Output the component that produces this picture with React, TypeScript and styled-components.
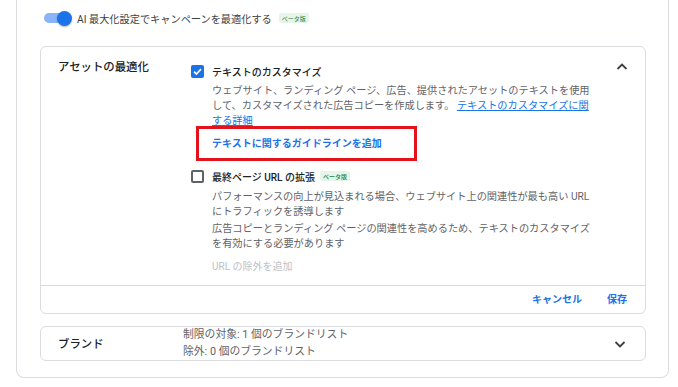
import styled, { createGlobalStyle } from 'styled-components';

const GlobalStyle = createGlobalStyle`
  body {
    margin: 0;
    background: #ffffff;
    font-family: Roboto, 'Noto Sans CJK JP', sans-serif;
    color: #3c4043;
  }
  * {
    box-sizing: border-box;
  }
`;

const Card = styled.div`
  margin-left: 16px;
  width: 653px;
  border: 1px solid #dadce0;
  border-top: 0;
  border-radius: 0 0 8px 8px;
  padding: 8px 22px 16px 23px;
`;

const ToggleRow = styled.div`
  display: flex;
  align-items: center;
  height: 20px;
  padding-left: 4px;
  font-size: 10.2px;
`;

const Toggle = styled.span`
  position: relative;
  display: inline-block;
  width: 28px;
  height: 15px;
  margin-right: 5px;
  &::before {
    content: '';
    position: absolute;
    left: 0;
    top: 2.5px;
    width: 27px;
    height: 10px;
    border-radius: 5px;
    background: #8ab4f8;
  }
  &::after {
    content: '';
    position: absolute;
    right: 0;
    top: 0;
    width: 15px;
    height: 15px;
    border-radius: 50%;
    background: #1a73e8;
    box-shadow: 0 1px 2px rgba(0, 0, 0, 0.3);
  }
`;

const Beta = styled.span<{ $gap: number }>`
  display: inline-flex;
  align-items: center;
  height: 10px;
  padding: 0 3px;
  margin-left: ${(p) => p.$gap}px;
  background: #e6f4ea;
  color: #188038;
  font-size: 6px;
  border-radius: 2px;
`;

const Panel = styled.div<{ $top: number }>`
  margin-top: ${(p) => p.$top}px;
  border: 1px solid #dadce0;
  border-radius: 6px;
`;

const PanelBody = styled.div<{ $cols: string; $align: string }>`
  display: grid;
  grid-template-columns: ${(p) => p.$cols};
  align-items: ${(p) => p.$align};
  padding-left: 17px;
`;

const Title = styled.div<{ $top?: number }>`
  margin-top: ${(p) => p.$top ?? 0}px;
  font-size: 11.4px;
  font-weight: 500;
  line-height: 16px;
  color: #202124;
`;

const Content = styled.div`
  display: flex;
  flex-direction: column;
  align-items: flex-start;
  padding-top: 12px;
`;

const CheckRow = styled.div<{ $top: number }>`
  display: flex;
  align-items: center;
  height: 16px;
  margin-top: ${(p) => p.$top}px;
  font-size: 10px;
  font-weight: 500;
  color: #202124;
`;

const Box = styled.span<{ $checked?: boolean }>`
  display: inline-flex;
  align-items: center;
  justify-content: center;
  width: 13px;
  height: 13px;
  margin-right: 8px;
  border-radius: 2px;
  background: ${(p) => (p.$checked ? '#1a73e8' : '#ffffff')};
  border: ${(p) => (p.$checked ? '0' : '2px solid #5f6368')};
`;

const Desc = styled.p<{ $top: number }>`
  margin: ${(p) => p.$top}px 0 0 21px;
  width: 385px;
  font-size: 10.2px;
  line-height: 15px;
  color: #5f6368;
`;

const InlineLink = styled.a`
  color: #1a73e8;
  text-decoration: underline;
`;

const Highlight = styled.div`
  margin: -2px 0 0 5px;
  width: 221px;
  height: 35px;
  border: 3px solid #e3131b;
  display: flex;
  align-items: center;
  padding-left: 13px;
`;

const Action = styled.span<{ $muted?: boolean }>`
  font-size: 10px;
  font-weight: ${(p) => (p.$muted ? 400 : 600)};
  color: ${(p) => (p.$muted ? '#bdc1c6' : '#1a73e8')};
  line-height: 15px;
`;

const Muted = styled.div`
  margin: 4px 0 11px 21px;
`;

const ChevronCell = styled.div<{ $top: number; $align: string }>`
  display: flex;
  justify-content: center;
  align-self: stretch;
  align-items: ${(p) => p.$align};
  padding-top: ${(p) => p.$top}px;
`;

const Footer = styled.div`
  display: flex;
  justify-content: flex-end;
  align-items: center;
  gap: 25px;
  height: 28px;
  padding-right: 18px;
  border-top: 1px solid #dadce0;
`;

const BrandLines = styled.div`
  font-size: 10.8px;
  line-height: 16.5px;
  color: #5f6368;
`;

function Chevron({ up }: { up?: boolean }) {
  return (
    <svg width="14" height="14" viewBox="0 0 14 14">
      <polyline
        points={up ? '2.5,9 7,4.5 11.5,9' : '2.5,5 7,9.5 11.5,5'}
        fill="none"
        stroke="#3c4043"
        strokeWidth="1.8"
      />
    </svg>
  );
}

function Check() {
  return (
    <svg width="11" height="11" viewBox="0 0 11 11">
      <polyline points="2,5.7 4.4,8 9,3.2" fill="none" stroke="#fff" strokeWidth="1.7" />
    </svg>
  );
}

export default function App() {
  return (
    <>
      <GlobalStyle />
      <Card>
        <ToggleRow>
          <Toggle />
          AI 最大化設定でキャンペーンを最適化する
          <Beta $gap={7}>ベータ版</Beta>
        </ToggleRow>

        <Panel $top={18}>
          <PanelBody $cols="133px 1fr 50px" $align="start">
            <Title $top={12}>アセットの最適化</Title>
            <Content>
              <CheckRow $top={4}>
                <Box $checked>
                  <Check />
                </Box>
                テキストのカスタマイズ
              </CheckRow>
              <Desc $top={4}>
                ウェブサイト、ランディング ページ、広告、提供されたアセットのテキストを使用して、カスタマイズされた広告コピーを作成します。{' '}
                <InlineLink>テキストのカスタマイズに関する詳細</InlineLink>
              </Desc>
              <Highlight>
                <Action>テキストに関するガイドラインを追加</Action>
              </Highlight>
              <CheckRow $top={7}>
                <Box />
                最終ページ URL の拡張
                <Beta $gap={5}>ベータ版</Beta>
              </CheckRow>
              <Desc $top={5}>
                パフォーマンスの向上が見込まれる場合、ウェブサイト上の関連性が最も高い URL にトラフィックを誘導します
              </Desc>
              <Desc $top={2}>
                広告コピーとランディング ページの関連性を高めるため、テキストのカスタマイズを有効にする必要があります
              </Desc>
              <Muted>
                <Action $muted>URL の除外を追加</Action>
              </Muted>
            </Content>
            <ChevronCell $top={13} $align="flex-start">
              <Chevron up />
            </ChevronCell>
          </PanelBody>
          <Footer>
            <Action>キャンセル</Action>
            <Action>保存</Action>
          </Footer>
        </Panel>

        <Panel $top={12}>
          <PanelBody $cols="125px 1fr 50px" $align="center">
            <Title>ブランド</Title>
            <BrandLines>
              制限の対象: 1 個のブランドリスト
              <br />
              除外: 0 個のブランドリスト
            </BrandLines>
            <ChevronCell $top={0} $align="center">
              <Chevron />
            </ChevronCell>
          </PanelBody>
        </Panel>
      </Card>
    </>
  );
}
